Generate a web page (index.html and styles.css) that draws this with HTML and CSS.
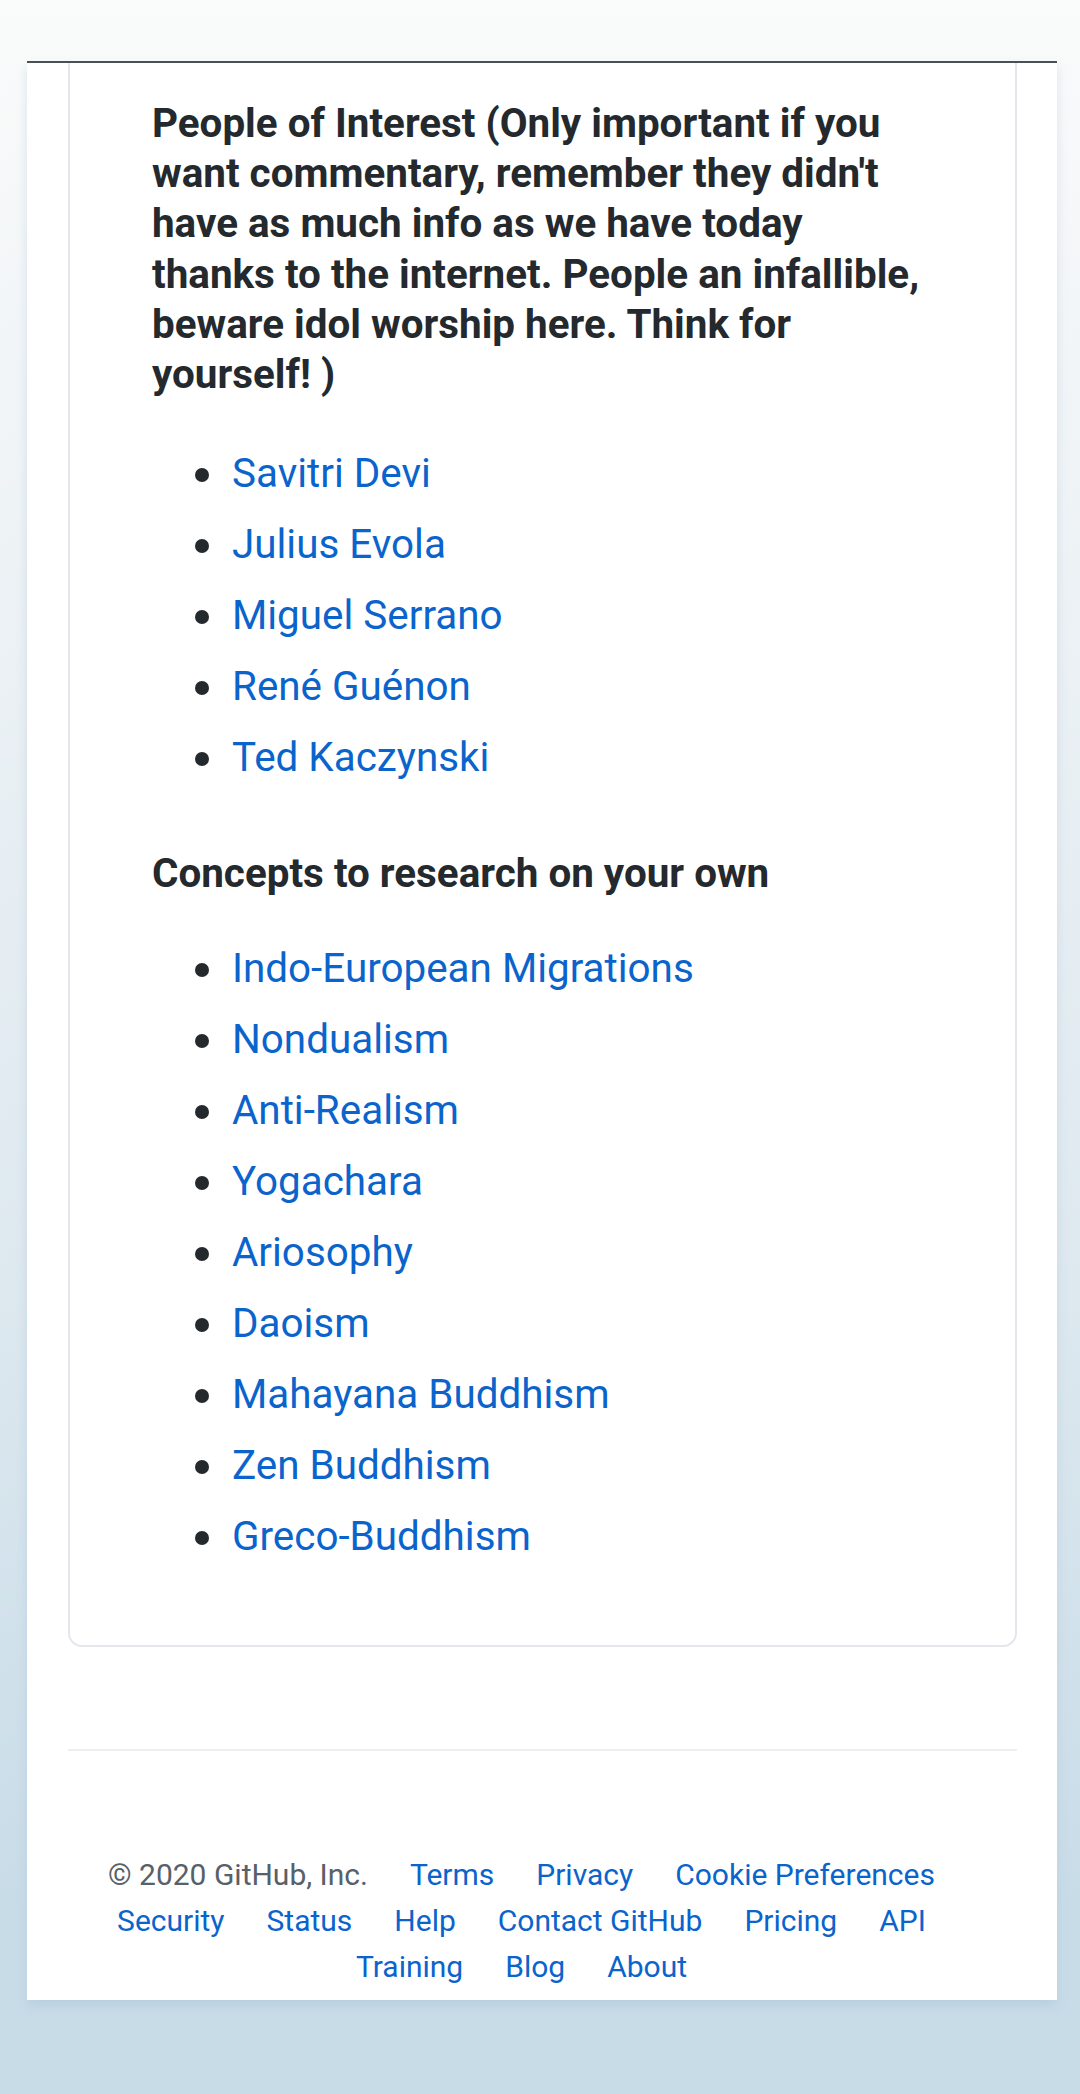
FILE: index.html
```html
<!DOCTYPE html>
<html lang="en">
<head>
<meta charset="utf-8">
<title>README</title>
<link rel="stylesheet" href="styles.css">
</head>
<body>
<div class="page">
  <article class="card">
    <h3 class="heading">People of Interest (Only important if you want commentary, remember they didn't have as much info as we have today thanks to the internet. People an infallible, beware idol worship here. Think for yourself! )</h3>
    <ul class="links">
      <li><a href="#">Savitri Devi</a></li>
      <li><a href="#">Julius Evola</a></li>
      <li><a href="#">Miguel Serrano</a></li>
      <li><a href="#">René Guénon</a></li>
      <li><a href="#">Ted Kaczynski</a></li>
    </ul>
    <h3 class="heading heading-second">Concepts to research on your own</h3>
    <ul class="links">
      <li><a href="#">Indo-European Migrations</a></li>
      <li><a href="#">Nondualism</a></li>
      <li><a href="#">Anti-Realism</a></li>
      <li><a href="#">Yogachara</a></li>
      <li><a href="#">Ariosophy</a></li>
      <li><a href="#">Daoism</a></li>
      <li><a href="#">Mahayana Buddhism</a></li>
      <li><a href="#">Zen Buddhism</a></li>
      <li><a href="#">Greco-Buddhism</a></li>
    </ul>
  </article>
  <footer class="footer">
    <ul class="footer-list">
      <li class="copy">© 2020 GitHub, Inc.</li>
      <li><a href="#">Terms</a></li>
      <li><a href="#">Privacy</a></li>
      <li><a href="#">Cookie Preferences</a></li>
      <li><a href="#">Security</a></li>
      <li><a href="#">Status</a></li>
      <li><a href="#">Help</a></li>
      <li><a href="#">Contact GitHub</a></li>
      <li><a href="#">Pricing</a></li>
      <li><a href="#">API</a></li>
      <li><a href="#">Training</a></li>
      <li><a href="#">Blog</a></li>
      <li><a href="#">About</a></li>
    </ul>
  </footer>
</div>
</body>
</html>
```

FILE: styles.css
```css
html, body {
  margin: 0;
  padding: 0;
}

body {
  min-height: 2094px;
  background: linear-gradient(180deg, #fafbfb 0px, #f3f6f8 300px, #dde8ef 1300px, #c8dce8 1900px, #c8dce8 100%);
  font-family: Roboto, "Noto Sans", "Liberation Sans", sans-serif;
  color: #24292e;
  padding-top: 61px;
  box-sizing: border-box;
}

.page {
  margin: 0 23px 0 27px;
  background: #ffffff;
  border-top: 2px solid #4a4f55;
  padding: 0 40px 10px 41px;
  box-shadow: 0 6px 10px rgba(160, 185, 205, 0.35);
}

.card {
  border: 2px solid #e3e6ea;
  border-top: none;
  border-radius: 0 0 14px 14px;
  padding: 36px 90px 78px 82px;
}

.heading {
  margin: 0 0 43px 0;
  font-size: 40.4px;
  line-height: 50.2px;
  font-weight: 700;
  color: #24292e;
}

.heading-second {
  margin-top: 61px;
  margin-bottom: 39px;
}

.links {
  margin: 0;
  padding: 0 0 0 43px;
  list-style: none;
  font-size: 40.4px;
  line-height: 61px;
}

.links li {
  display: flex;
  align-items: center;
}

.links li::before {
  content: "";
  flex: none;
  width: 14px;
  height: 14px;
  border-radius: 50%;
  background: #24292e;
  margin-right: 23px;
  margin-top: 2px;
}

.links li + li {
  margin-top: 10px;
}

.links a {
  color: #0a64cc;
  text-decoration: none;
}

.footer {
  margin-top: 102px;
  border-top: 2px solid #eceef0;
  padding-top: 101px;
}

.footer-list {
  margin: 0;
  padding: 0;
  list-style: none;
  display: flex;
  flex-wrap: wrap;
  justify-content: center;
  font-size: 30px;
  line-height: 46px;
}

.footer-list li {
  margin-right: 42px;
}

.footer-list .copy {
  color: #586069;
}

.footer-list a {
  color: #0a64cc;
  text-decoration: none;
}
```
